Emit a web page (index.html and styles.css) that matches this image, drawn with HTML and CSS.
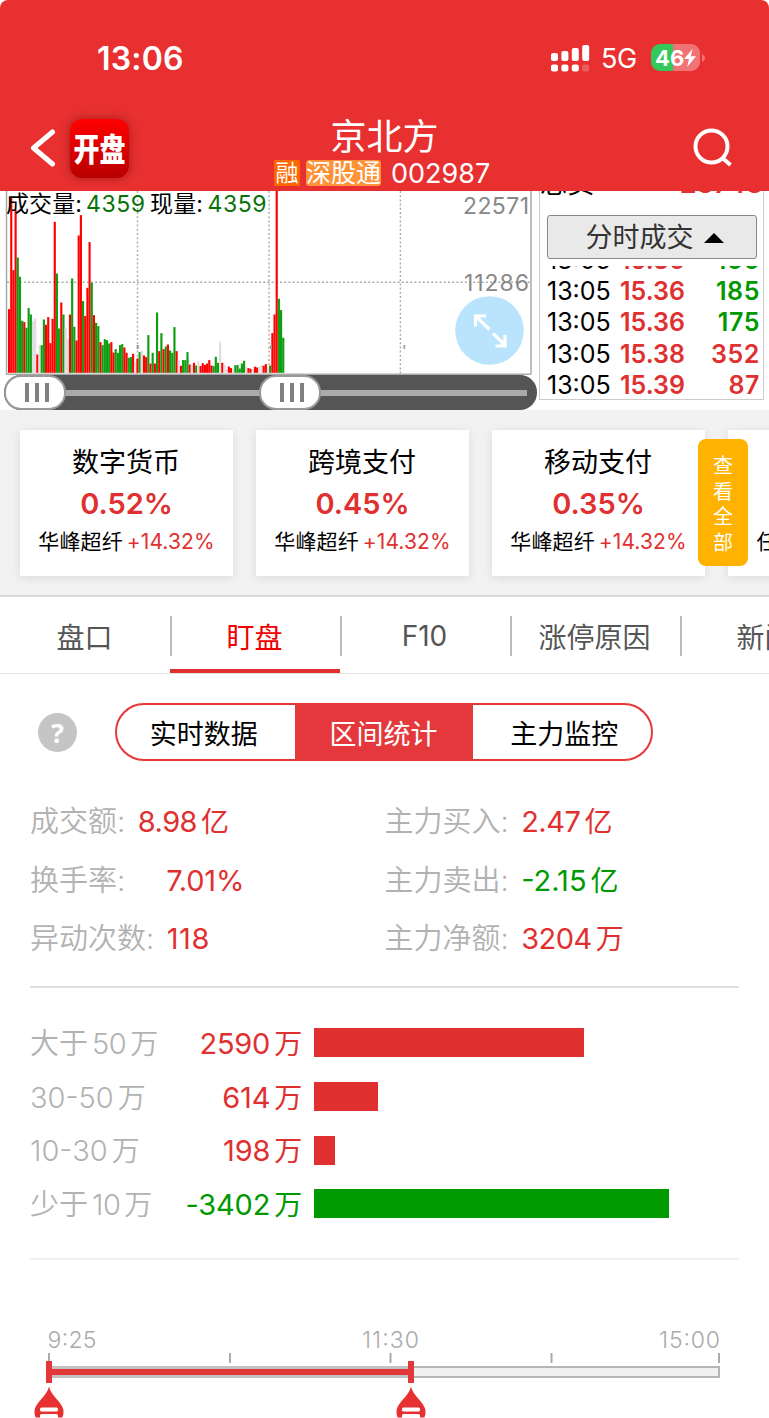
FILE: index.html
```html
<!DOCTYPE html>
<html lang="zh-CN">
<head>
  <meta charset="UTF-8">
  <meta name="viewport" content="width=device-width, initial-scale=1.0">
  <title>京北方 002987</title>
  <link rel="stylesheet" href="styles.css">
</head>
<body>
  <!-- Header Section -->
  <header>
    <div class="status-bar">
      <span class="clock">13:06</span>
      <svg class="signal" width="40" height="28" viewBox="0 0 40 28" fill="#fff">
        <rect x="0" y="9" width="7" height="8" rx="2"/>
        <rect x="10.4" y="7" width="7" height="10" rx="2"/>
        <rect x="20.8" y="4" width="7" height="13" rx="2"/>
        <rect x="31.2" y="1" width="7" height="16" rx="2"/>
        <rect x="0" y="20.5" width="7" height="7" rx="2"/>
        <rect x="10.4" y="20.5" width="7" height="7" rx="2"/>
        <rect x="20.8" y="20.5" width="7" height="7" rx="2"/>
        <rect x="31.2" y="20.5" width="7" height="7" rx="2" opacity=".22"/>
      </svg>
      <span class="network">5G</span>
      <div class="battery">
        <span>46</span>
        <svg width="12" height="18" viewBox="0 0 12 18"><path d="M8.5 0 0 10h5L3.2 18 12 7.2H6.8z" fill="#fff"/></svg>
      </div>
      <svg class="battery-tip" width="3" height="8" viewBox="0 0 3 8"><path d="M0 0Q3 1.5 3 4T0 8z" fill="#f07376"/></svg>
    </div>
    <nav>
      <div class="nav-left">
        <svg width="26" height="38" viewBox="0 0 26 38"><path d="M22.5 3 3.5 19l19 16" fill="none" stroke="#fff" stroke-width="5" stroke-linecap="round" stroke-linejoin="round"/></svg>
        <div class="app-logo"><span>开盘</span></div>
      </div>
      <div class="nav-title">
        <h1>京北方</h1>
        <div class="stock-code">
          <span class="tag tag-rong">融</span>
          <span class="tag tag-sgt">深股通</span>
          <span class="code">002987</span>
        </div>
      </div>
      <svg class="search" width="40" height="40" viewBox="0 0 40 40" fill="none" stroke="#fff" stroke-width="4"><circle cx="18.5" cy="18.5" r="16"/><path d="m29.5 30 8 7"/></svg>
    </nav>
  </header>

  <!-- Volume chart and trade list -->
  <section class="market">
    <div class="chart">
      <svg width="538" height="184" viewBox="0 0 538 184">
        <g stroke="#aaa" stroke-width="1.4" stroke-dasharray="2 2.2">
          <path d="M7 91.2H531M137.5 0V183M269 0V183M400.4 0V183"/>
        </g>
        <path d="M6.5 0V183.5M531 0V183.5M6 183.3H531" stroke="#aaa" stroke-width="1.5"/>
        <g id="volume-bars"></g>
        <path d="M136.7 154h2v4h-2zM270 154h2v4h-2zM403.5 154h1.6v4h-1.6z" fill="#999"/>
        <text class="vol-black" x="6" y="20.5" textLength="76">成交量:</text>
        <text class="vol-green" x="86" y="20.5" textLength="59">4359</text>
        <text class="vol-black" x="150" y="20.5" textLength="53">现量:</text>
        <text class="vol-green" x="207.5" y="20.5" textLength="59">4359</text>
        <text class="vol-scale" x="463" y="23" textLength="66">22571</text>
        <text class="vol-scale" x="464" y="100" textLength="65">11286</text>
        <circle cx="489.5" cy="139.5" r="34.3" fill="#bae4fe"/>
        <path d="M475.5 135.5V125H486M475.5 125l14 13.5M493 142.5l13 12.5M495.5 155H505V144" fill="none" stroke="#fff" stroke-width="3.2"/>
      </svg>
      <div class="range">
        <div class="range-track"></div>
        <div class="thumb thumb-start"><i></i><i></i><i></i></div>
        <div class="thumb thumb-end"><i></i><i></i><i></i></div>
      </div>
    </div>
    <div class="trades">
      <div class="total-sell"><span>总卖</span><b>28748</b></div>
      <div class="trade-btn">分时成交<i class="arrow-up"></i></div>
      <div class="trade-list">
        <div class="trade"><span>13:05</span><b>15.36</b><b class="down">166</b></div>
        <div class="trade"><span>13:05</span><b>15.36</b><b class="down">185</b></div>
        <div class="trade"><span>13:05</span><b>15.36</b><b class="down">175</b></div>
        <div class="trade"><span>13:05</span><b>15.38</b><b>352</b></div>
        <div class="trade"><span>13:05</span><b>15.39</b><b>87</b></div>
      </div>
    </div>
  </section>

  <!-- Concept cards -->
  <section class="concepts">
    <div class="card">
      <h3>数字货币</h3>
      <strong>0.52%</strong>
      <p>华峰超纤<span>+14.32%</span></p>
    </div>
    <div class="card">
      <h3>跨境支付</h3>
      <strong>0.45%</strong>
      <p>华峰超纤<span>+14.32%</span></p>
    </div>
    <div class="card">
      <h3>移动支付</h3>
      <strong>0.35%</strong>
      <p>华峰超纤<span>+14.32%</span></p>
    </div>
    <div class="card">
      <h3></h3>
      <strong></strong>
      <p>任子行<span>+10.04%</span></p>
    </div>
    <div class="view-all">查看全部</div>
  </section>

  <!-- Tabs -->
  <div class="tabs">
    <div class="tab">盘口</div>
    <div class="tab active">盯盘</div>
    <div class="tab">F10</div>
    <div class="tab">涨停原因</div>
    <div class="tab">新闻</div>
  </div>

  <main>
    <div class="switch-row">
      <div class="help">?</div>
      <div class="segment">
        <div>实时数据</div>
        <div class="selected">区间统计</div>
        <div>主力监控</div>
      </div>
    </div>

    <div class="stats">
      <div class="stat">成交额:<span>8.98<em>亿</em></span></div>
      <div class="stat">主力买入:<span>2.47<em>亿</em></span></div>
      <div class="stat wide">换手率:<span>7.01%</span></div>
      <div class="stat">主力卖出:<span class="down">-2.15<em>亿</em></span></div>
      <div class="stat">异动次数:<span class="count">118</span></div>
      <div class="stat">主力净额:<span>3204<em>万</em></span></div>
    </div>

    <div class="flows">
      <div class="flow">
        <span class="flow-label">大于<i>50</i><em>万</em></span>
        <span class="flow-value">2590<em>万</em></span>
        <div class="bar" style="width: 270px"></div>
      </div>
      <div class="flow">
        <span class="flow-label">30-50<em>万</em></span>
        <span class="flow-value">614<em>万</em></span>
        <div class="bar" style="width: 64px"></div>
      </div>
      <div class="flow">
        <span class="flow-label">10-30<em>万</em></span>
        <span class="flow-value">198<em>万</em></span>
        <div class="bar" style="width: 21px"></div>
      </div>
      <div class="flow fall">
        <span class="flow-label">少于<i>10</i><em>万</em></span>
        <span class="flow-value">-3402<em>万</em></span>
        <div class="bar" style="width: 355px"></div>
      </div>
    </div>

    <!-- Time range picker -->
    <svg class="timeline" width="769" height="100" viewBox="0 0 769 100">
      <g class="time-text">
        <text x="47.5" y="29.5" textLength="49">9:25</text>
        <text x="362" y="29.5" textLength="57">11:30</text>
        <text x="659" y="29.5" textLength="61">15:00</text>
      </g>
      <path d="M49 35v10M230 35v10M390.5 35v10M551.5 35v10M719 35v10" stroke="#aaa" stroke-width="2"/>
      <rect x="49" y="49" width="670" height="10" fill="#f0f0f0" stroke="#b5b5b5" stroke-width="2"/>
      <rect x="49" y="48" width="362" height="12" fill="#c2c2c2"/>
      <rect x="49" y="51" width="362" height="6" fill="#e2383c"/>
      <rect x="46" y="43" width="6" height="22" fill="#e2383c"/>
      <rect x="408" y="43" width="6" height="22" fill="#e2383c"/>
      <g id="drop">
        <path d="M49 68.5C51 78 62 84 63.400 92q.6 4-1 7.500H35.600q-1.600-3.500-1-7.500C36 84 47 78 49 68.500z" fill="#e83030"/>
        <rect x="40" y="89.5" width="18" height="4" rx="1.5" fill="#fff"/>
        <path d="M40 97.5q0-1.500 1.500-1.500h15q1.500 0 1.500 1.500V100H40z" fill="#fff"/>
      </g>
      <use href="#drop" x="362"/>
    </svg>
  </main>

  <script>
    // Minute volume: r = up, g = down, w = flat, followed by the height
    const volume = `r191 r528 r308 r488 g346 g288 g156 r152 g135 g194 g175 w156 w163 r55 w83 g83
      g160 r144 r167 r89 r162 r453 g298 g133 r211 g175 w135 w102 r175 g283 g138 r97
      r412 r473 g215 r170 r255 r392 g270 r173 g150 g140 r92 g83 g101 g98 g88 r92
      r61 g71 g60 g83 g86 r76 r60 g45 g47 r57 w33 r43 g62 w66 r52 r47
      g113 r28 g60 r28 g181 r65 g119 r71 g79 r85 g67 g60 g137 r65 w37 r21
      g38 g38 g62 r25 w25 r30 g22 w35 r20 r29 r24 r28 r38 r22 g20 g48
      g30 w93 r30 w25 w11 r19 r14 w13 g23 g23 g13 g28 g36 w18 r14 r12
      w11 r18 r16 w18 w23 r21 r26 w18 g22 r119 r175 r548 g222 g188 g105`.split(/\s+/);
    const colors = { r: '#ff0000', g: '#0f9d12', w: '#dedede' };
    const step = 2.176;

    document.getElementById('volume-bars').innerHTML = volume.map((item, i) => {
      const height = item.slice(1) / 3;
      return `<rect x="${(8 + i * step).toFixed(2)}" y="${(181.8 - height).toFixed(1)}" width="2.15" height="${height.toFixed(1)}" fill="${colors[item[0]]}"/>`;
    }).join('');
  </script>
</body>
</html>
```
FILE: styles.css
```css
/* Global Styles */
* {
  margin: 0;
  padding: 0;
  box-sizing: border-box;
}

body {
  width: 769px;
  height: 1418px;
  overflow: hidden;
  background-color: #fff;
  color: #000;
  font-family: Inter, "Noto Sans CJK SC", sans-serif;
}

em,
i {
  font-style: normal;
}

/* Header Styles */
header {
  height: 191px;
  background-color: #e83030;
  border-radius: 8px 8px 0 0;
  color: #fff;
}

.status-bar {
  display: flex;
  align-items: center;
  height: 115px;
  padding-left: 97px;
}

.clock {
  width: 454px;
  padding-top: 1px;
  font-size: 32px;
  font-weight: 600;
  letter-spacing: 0.2px;
}

.network {
  width: 49px;
  margin-left: 10px;
  padding-top: 2px;
  font-size: 27px;
  letter-spacing: -0.5px;
}

.battery {
  display: flex;
  align-items: center;
  width: 49px;
  height: 27px;
  margin-left: 1px;
  padding-left: 4px;
  border-radius: 9px;
  background: linear-gradient(to right, #34c759 0 22px, #f07376 22px);
  font-size: 22px;
  font-weight: 700;
}

.battery-tip {
  margin-left: 2px;
}

nav {
  display: grid;
  grid-template-columns: 230px 1fr 230px;
  height: 76px;
}

.nav-left {
  display: flex;
  align-items: center;
  gap: 14px;
  height: 66px;
  padding-left: 30px;
}

.app-logo {
  width: 59px;
  height: 59px;
  border-radius: 12px;
  background: linear-gradient(#ff0000, #b80000);
  box-shadow: 0 0 10px rgba(80, 0, 0, 0.45);
  font-size: 26px;
  font-weight: 900;
  line-height: 61px;
  text-align: center;
}

.app-logo span {
  display: block;
  transform: scaleY(1.22);
}

.nav-title h1 {
  height: 42px;
  font-size: 36px;
  font-weight: 400;
  line-height: 45px;
  text-align: center;
}

.stock-code {
  display: flex;
  align-items: center;
  justify-content: center;
  height: 32px;
  padding-right: 4px;
}

.tag {
  height: 26px;
  line-height: 26px;
  font-size: 25px;
  text-align: center;
}

.tag-rong {
  width: 26px;
  margin-right: 6px;
  background-color: #ff6600;
  font-size: 23px;
}

.tag-sgt {
  width: 75px;
  margin-right: 10px;
  border-radius: 3px;
  background-color: #ff9238;
}

.code {
  width: 100px;
  font-size: 27px;
}

.search {
  justify-self: end;
  margin: 13px 36px 0 0;
}

/* Market Styles */
.market {
  display: flex;
  height: 219px;
}

.chart {
  width: 538px;
}

.chart svg {
  display: block;
}

.vol-black,
.vol-green {
  font-size: 23px;
}

.vol-green {
  fill: #087208;
}

.vol-scale {
  fill: #888;
  font-size: 23px;
}

.range {
  position: relative;
  width: 533px;
  height: 35px;
  margin-left: 4px;
  padding: 15px 10px 0 50px;
  border-radius: 17px;
  background-color: #555;
}

.range-track {
  height: 6px;
  background-color: #aaa;
}

.thumb {
  position: absolute;
  top: 0;
  display: flex;
  align-items: center;
  justify-content: center;
  gap: 6px;
  width: 62px;
  height: 35px;
  padding-left: 4px;
  border: 2px solid #999;
  border-radius: 17px;
  background-color: #fff;
}

.thumb i {
  width: 4px;
  height: 19px;
  background-color: #808080;
}

.thumb-start {
  left: 0;
}

.thumb-end {
  left: 255px;
}

.trades {
  width: 225px;
  height: 209px;
  margin-left: 1px;
  border: 1px solid #ccc;
  border-top: 0;
  overflow: hidden;
}

.trades b {
  color: #e03030;
  font-weight: 600;
}

.trades .down {
  color: #009900;
}

.total-sell {
  display: flex;
  justify-content: space-between;
  height: 24px;
  margin-top: -22px;
  font-size: 27px;
  line-height: 30px;
}

.trade-btn {
  display: flex;
  align-items: center;
  justify-content: center;
  gap: 10px;
  height: 44px;
  margin: 22px 6px 0 7px;
  padding: 2px 0 0 5px;
  border: 1px solid #888;
  border-radius: 3px;
  background-color: #e9e9e9;
  color: #333;
  font-size: 27px;
  line-height: 42px;
}

.arrow-up {
  border: solid transparent;
  border-width: 0 10px 10px;
  border-bottom-color: #000;
}

.trade-list {
  display: flex;
  flex-direction: column;
  justify-content: flex-end;
  height: 134px;
  margin: 7px 3px 0 7px;
  overflow: hidden;
}

.trade {
  display: flex;
  flex-shrink: 0;
  height: 31.2px;
  font-size: 25px;
  line-height: 33px;
}

.trade span {
  width: 73px;
}

.trade b:last-child {
  margin-left: auto;
  letter-spacing: 0.6px;
}

/* Concept Cards */
.concepts {
  position: relative;
  display: flex;
  gap: 23px;
  height: 187px;
  padding: 20px 0 0 20px;
  border-bottom: 2px solid #d9d9d9;
  background-color: #f2f2f2;
  overflow: hidden;
}

.card {
  flex: 0 0 213px;
  height: 146px;
  padding-top: 12px;
  background-color: #fff;
  box-shadow: 0 2px 10px rgba(0, 0, 0, 0.1);
  text-align: center;
}

.card h3 {
  height: 41px;
  padding-right: 1px;
  font-size: 27px;
  font-weight: 400;
  line-height: 42px;
}

.card strong {
  display: block;
  height: 41px;
  color: #e03030;
  font-size: 29px;
  font-weight: 600;
  line-height: 41px;
}

.card p {
  font-size: 21px;
  letter-spacing: 0.1px;
  line-height: 35px;
}

.card p span {
  margin-left: 4px;
  color: #e03030;
}

.view-all {
  position: absolute;
  top: 29px;
  left: 698px;
  width: 50px;
  height: 127px;
  padding: 15px 15px 0;
  border-radius: 8px;
  background-color: #ffb300;
  color: #fff;
  font-size: 20px;
  line-height: 25.5px;
}

/* Tabs */
.tabs {
  display: flex;
  height: 77px;
  border-bottom: 1px solid #e2e2e2;
  overflow: hidden;
}

.tab {
  display: flex;
  flex: 0 0 170px;
  align-items: center;
  justify-content: center;
  height: 76px;
  padding: 6px 1px 0 0;
  border-bottom: 4px solid transparent;
  color: #555;
  font-size: 28px;
}

.tab + .tab {
  background: linear-gradient(#bbb, #bbb) left top 19px / 2px 40px no-repeat border-box;
}

.tab.active {
  border-bottom-color: #e03030;
  color: #f00000;
}

/* Switch */
.switch-row {
  display: flex;
  align-items: center;
  height: 58px;
  margin: 29px 0 30px 38px;
}

.help {
  width: 39px;
  height: 39px;
  margin-right: 38px;
  border-radius: 50%;
  background-color: #c5c5c5;
  color: #fff;
  font: 700 27px/39px "Noto Sans", sans-serif;
  text-align: center;
}

.segment {
  display: flex;
  width: 538px;
  height: 58px;
  border: 2px solid #e4383c;
  border-radius: 29px;
  overflow: hidden;
}

.segment div {
  flex: 1;
  font-size: 27px;
  line-height: 59px;
  text-align: center;
}

.segment div:first-child {
  padding-right: 4px;
}

.segment div:last-child {
  padding-left: 5px;
}

.segment .selected {
  flex: 0 0 178px;
  background-color: #e4383c;
  color: #fff;
}

/* Statistics */
.stats {
  display: grid;
  grid-template-columns: 354.5px 1fr;
  grid-auto-rows: 58.7px;
  height: 197px;
  margin: 0 30px;
  border-bottom: 2px solid #e0e0e0;
}

.stat {
  color: #b2b2b2;
  font-size: 29px;
  font-weight: 350;
  line-height: 61px;
}

.stat span {
  margin-left: 12.5px;
  color: #e03030;
  font-weight: 400;
  letter-spacing: -0.5px;
}

.stat.wide span {
  margin-left: 41px;
  letter-spacing: -0.2px;
}

.stat .count {
  letter-spacing: 0.6px;
}

.stat .down {
  color: #009900;
  letter-spacing: 0;
}

.stat em,
.flow em {
  margin-left: 4px;
  font-size: 28px;
}

/* Money flow bars */
.flows {
  height: 272px;
  margin: 0 30px;
  padding-top: 28px;
  border-bottom: 2px solid #f0f0f0;
}

.flow {
  display: flex;
  align-items: center;
  height: 53.7px;
  font-size: 29px;
}

.flow-label,
.flow-value {
  height: 44px;
  line-height: 45px;
}

.flow-label {
  width: 140px;
  color: #b2b2b2;
  font-weight: 350;
}

.flow-label i {
  margin-left: 4px;
  letter-spacing: -0.5px;
}

.flow-value {
  width: 132px;
  margin-right: 12px;
  color: #e03030;
  letter-spacing: -0.2px;
  text-align: right;
}

.bar {
  height: 29px;
  background-color: #e03030;
}

.fall .flow-value {
  color: #009900;
}

.fall .bar {
  background-color: #009900;
}

/* Timeline */
.timeline {
  display: block;
  margin-top: 58px;
}

.time-text {
  fill: #aaa;
  font-size: 23px;
  font-weight: 350;
}
```
